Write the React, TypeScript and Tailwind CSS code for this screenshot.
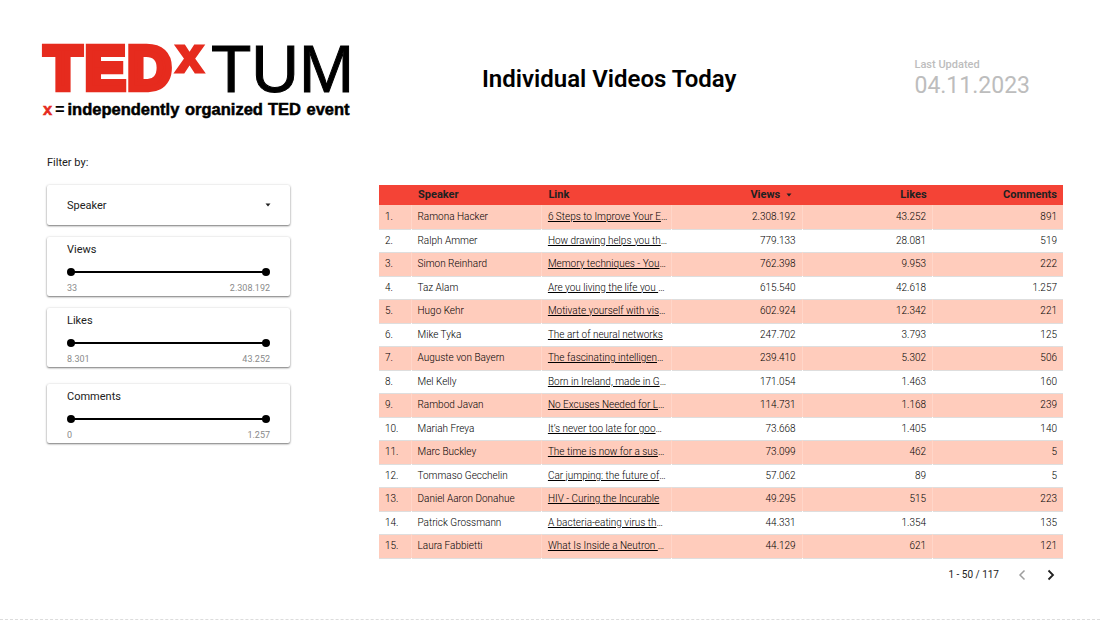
import { useId, useState } from "react";

type Video = {
  speaker: string;
  link: string;
  views: string;
  likes: string;
  comments: string;
};

const videos: Video[] = [
  { speaker: "Ramona Hacker", link: "6 Steps to Improve Your E…", views: "2.308.192", likes: "43.252", comments: "891" },
  { speaker: "Ralph Ammer", link: "How drawing helps you th…", views: "779.133", likes: "28.081", comments: "519" },
  { speaker: "Simon Reinhard", link: "Memory techniques - You…", views: "762.398", likes: "9.953", comments: "222" },
  { speaker: "Taz Alam", link: "Are you living the life you …", views: "615.540", likes: "42.618", comments: "1.257" },
  { speaker: "Hugo Kehr", link: "Motivate yourself with vis…", views: "602.924", likes: "12.342", comments: "221" },
  { speaker: "Mike Tyka", link: "The art of neural networks", views: "247.702", likes: "3.793", comments: "125" },
  { speaker: "Auguste von Bayern", link: "The fascinating intelligen…", views: "239.410", likes: "5.302", comments: "506" },
  { speaker: "Mel Kelly", link: "Born in Ireland, made in G…", views: "171.054", likes: "1.463", comments: "160" },
  { speaker: "Rambod Javan", link: "No Excuses Needed for L…", views: "114.731", likes: "1.168", comments: "239" },
  { speaker: "Mariah Freya", link: "It’s never too late for goo…", views: "73.668", likes: "1.405", comments: "140" },
  { speaker: "Marc Buckley", link: "The time is now for a sus…", views: "73.099", likes: "462", comments: "5" },
  { speaker: "Tommaso Gecchelin", link: "Car jumping: the future of…", views: "57.062", likes: "89", comments: "5" },
  { speaker: "Daniel Aaron Donahue", link: "HIV - Curing the Incurable", views: "49.295", likes: "515", comments: "223" },
  { speaker: "Patrick Grossmann", link: "A bacteria-eating virus th…", views: "44.331", likes: "1.354", comments: "135" },
  { speaker: "Laura Fabbietti", link: "What Is Inside a Neutron …", views: "44.129", likes: "621", comments: "121" },
];

const format = (n: number) => n.toLocaleString("de-DE");

function Logo() {
  return (
    <svg viewBox="0 0 620 156" role="img" aria-label="TEDxTUM, x = independently organized TED event" className="h-[78px] w-[310px] shrink-0 overflow-visible">
      <g fill="#e62b1e" stroke="#e62b1e" fontFamily="Liberation Sans, Arial, sans-serif" fontWeight="700">
        <g fontSize="121" strokeWidth="13">
          <text x="5" y="92">T</text>
          <text x="86" y="92">E</text>
          <text x="171" y="92">D</text>
        </g>
        <text x="268" y="58" fontSize="98" strokeWidth="6">x</text>
      </g>
      <text x="338" y="98" fontSize="132" fill="#000" stroke="#000" strokeWidth="2" fontFamily="Liberation Sans, Arial, sans-serif">TUM</text>
      <g fontFamily="Liberation Sans, Arial, sans-serif" fontWeight="700" fontSize="33">
        <text x="2" y="144" fill="#e62b1e" stroke="#e62b1e">x</text>
        <text x="26" y="144">=</text>
        <text x="51" y="144" stroke="#000">independently</text>
        <text x="286" y="144" stroke="#000">organized</text>
        <text x="452" y="144" stroke="#000">TED</text>
        <text x="529" y="144" stroke="#000">event</text>
      </g>
    </svg>
  );
}

function Caret({ className }: { className: string }) {
  return (
    <svg viewBox="0 0 6 4" className={className} aria-hidden="true">
      <path d="M0.5 0.5h5L3 3.5z" fill="currentColor" />
    </svg>
  );
}

const thumb =
  "absolute inset-x-0 top-0 h-2 w-full appearance-none bg-transparent pointer-events-none outline-none [&::-webkit-slider-thumb]:pointer-events-auto [&::-webkit-slider-thumb]:size-2 [&::-webkit-slider-thumb]:appearance-none [&::-webkit-slider-thumb]:rounded-full [&::-webkit-slider-thumb]:bg-black";

function RangeCard({ label, min, max }: { label: string; min: number; max: number }) {
  const id = useId();
  const [low, setLow] = useState(min);
  const [high, setHigh] = useState(max);
  return (
    <div role="group" aria-labelledby={id} className="h-[59px] rounded-xs bg-white px-5 pt-[5px] shadow-[0_1px_2px_rgba(0,0,0,0.5),0_0_3px_rgba(0,0,0,0.1)]">
      <div id={id} className="text-[11px] leading-4 text-[#212121]">{label}</div>
      <div className="relative mt-2.5 flex h-2 items-center">
        <div className="mx-1 h-0.5 flex-1 bg-black" />
        <input type="range" aria-label={`${label} minimum`} min={min} max={max} value={low} onChange={(e) => setLow(Math.min(+e.target.value, high))} className={thumb} />
        <input type="range" aria-label={`${label} maximum`} min={min} max={max} value={high} onChange={(e) => setHigh(Math.max(+e.target.value, low))} className={thumb} />
      </div>
      <div className="mt-1 flex justify-between text-[9px] leading-4 text-[#8a8a8a]">
        <span>{format(low)}</span>
        <span>{format(high)}</span>
      </div>
    </div>
  );
}

export default function App() {
  return (
    <div className="flex min-h-screen flex-col border-b border-dashed border-[#dcdcdc] bg-white font-['Roboto',sans-serif] text-[#212121]">
      <header className="flex items-start pt-[43px] pr-[70px] pl-[42px]">
        <Logo />
        <h1 className="flex-1 pt-5 pr-12 text-center text-2xl leading-8 font-semibold text-black">Individual Videos Today</h1>
        <div className="pt-[14px] text-[#bdbdbd]">
          <div className="text-[11px] leading-4 font-medium">Last Updated</div>
          <div className="text-[23px] leading-[26px]">04.11.2023</div>
        </div>
      </header>

      <p className="mt-[34px] pl-[47px] text-[11px] leading-4">Filter by:</p>

      <main className="mt-[14px] grid grid-cols-[243px_1fr] gap-[89px] pr-[37px] pl-[47px]">
        <aside className="flex flex-col gap-3">
          <div className="relative flex h-10 items-center rounded-xs bg-white shadow-[0_1px_2px_rgba(0,0,0,0.5),0_0_3px_rgba(0,0,0,0.1)]">
            <select aria-label="Speaker" className="h-full w-full appearance-none bg-transparent px-5 pt-0.5 text-[11px] text-[#212121]">
              <option>Speaker</option>
              {videos.map((v) => (
                <option key={v.speaker}>{v.speaker}</option>
              ))}
            </select>
            <Caret className="pointer-events-none absolute right-[19px] h-1 w-1.5" />
          </div>
          <RangeCard label="Views" min={33} max={2308192} />
          <RangeCard label="Likes" min={8301} max={43252} />
          <div className="pt-[5px]">
            <RangeCard label="Comments" min={0} max={1257} />
          </div>
        </aside>

        <section>
          <table className="w-full table-fixed border-collapse text-[10px] leading-4">
            <thead>
              <tr className="h-5 bg-[#f44336] text-[11px]">
                <th className="w-8 p-0" aria-label="Rank" />
                <th className="py-0 pl-[7px] text-left font-bold">Speaker</th>
                <th className="py-0 pl-[7px] text-left font-bold">Link</th>
                <th className="py-0 pr-2.5 text-right font-bold" aria-sort="descending">
                  Views
                  <Caret className="ml-1.5 inline-block h-1 w-1.5 align-middle" />
                </th>
                <th className="py-0 pr-1.5 text-right font-bold">Likes</th>
                <th className="py-0 pr-1.5 text-right font-bold">Comments</th>
              </tr>
            </thead>
            <tbody className="font-light text-black">
              {videos.map((v, i) => (
                <tr key={v.speaker} className="border-b border-[#dedede] odd:h-6 odd:bg-[#ffccbc] even:h-[23px] [&>td]:border-white/20 [&>td]:not-last:border-r">
                  <td className="py-0 pl-1.5">{i + 1}.</td>
                  <td className="py-0 pl-1.5 whitespace-nowrap">{v.speaker}</td>
                  <td className="py-0 pl-1.5 whitespace-nowrap">
                    <a href="#video" className="underline">{v.link.replace("…", "")}</a>
                    {v.link.endsWith("…") && "…"}
                  </td>
                  <td className="py-0 pr-1.5 text-right">{v.views}</td>
                  <td className="py-0 pr-1.5 text-right">{v.likes}</td>
                  <td className="py-0 pr-1.5 text-right">{v.comments}</td>
                </tr>
              ))}
            </tbody>
          </table>
          <nav aria-label="Pages" className="mt-1.5 flex items-center justify-end pr-1 text-[10px] leading-5">
            <span className="mr-3">1 - 50 / 117</span>
            <button type="button" aria-label="Previous page" disabled className="mr-2 flex size-5 items-center justify-center pl-0.5 text-[#9e9e9e]">
              <svg viewBox="0 0 8 12" className="h-3 w-2" fill="none" stroke="currentColor" strokeWidth="1.5"><path d="M6.5 1.5L2 6l4.5 4.5" /></svg>
            </button>
            <button type="button" aria-label="Next page" className="flex size-5 items-center justify-center pl-1 text-[#212121]">
              <svg viewBox="0 0 8 12" className="h-3 w-2" fill="none" stroke="currentColor" strokeWidth="1.8"><path d="M1.5 1.5L6 6l-4.5 4.5" /></svg>
            </button>
          </nav>
        </section>
      </main>
    </div>
  );
}
